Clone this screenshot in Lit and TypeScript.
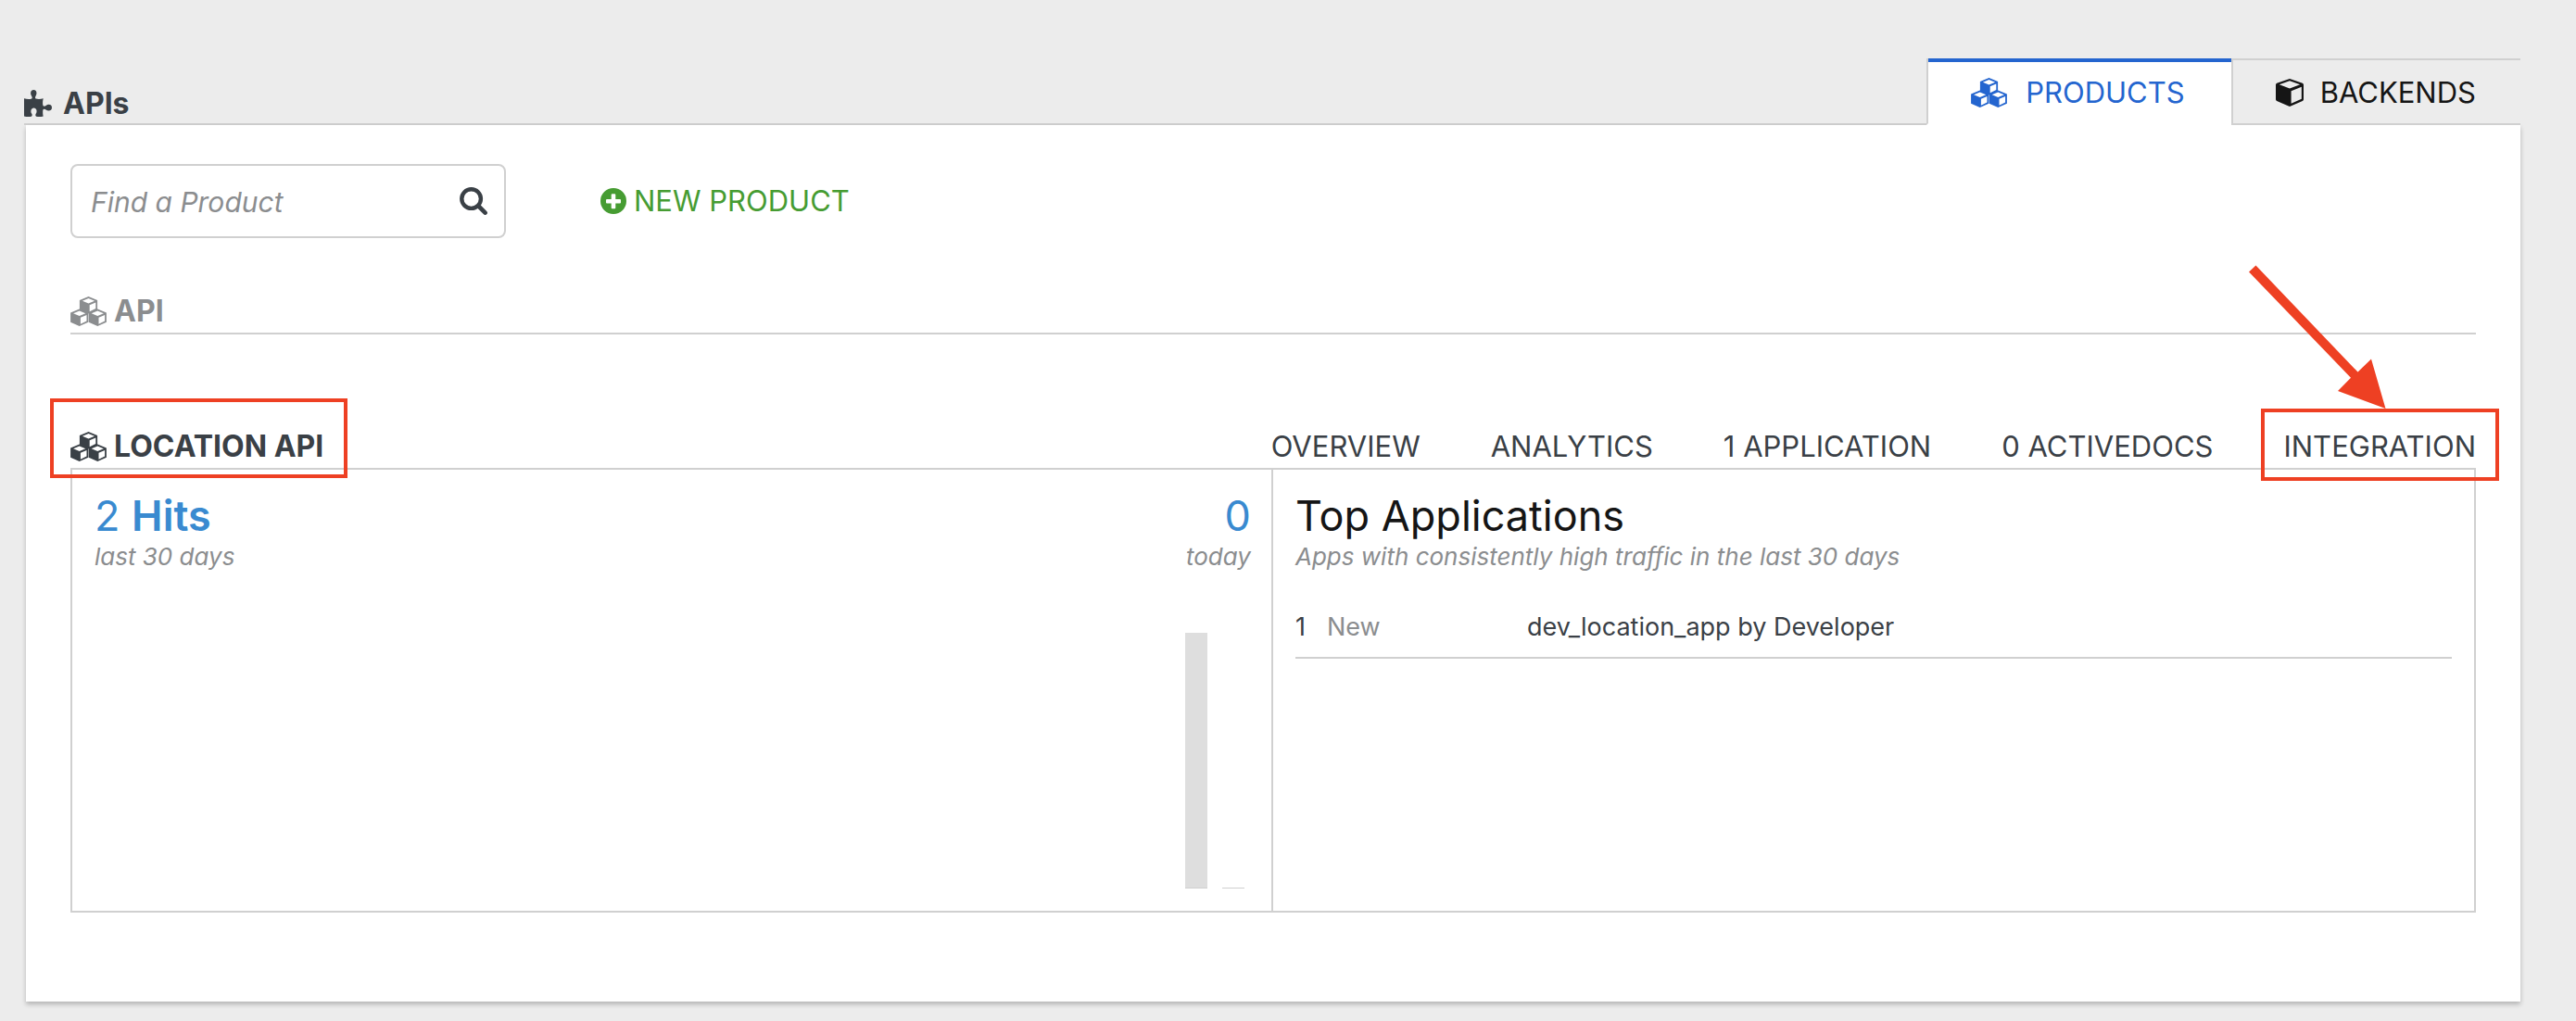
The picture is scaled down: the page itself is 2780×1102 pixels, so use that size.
import { LitElement, html, css, svg } from "lit";
import { customElement, state } from "lit/decorators.js";

const cube = (x: number, y: number) => svg`
  <path fill-rule="evenodd" transform="translate(${x} ${y})"
    d="M10 0L19.6 4V14.2L10 18.5L.4 14.2V4ZM10 1.9L16.6 4.7L10 7.5L3.4 4.7ZM11.2 9.3L17.8 6.5V13.1L11.2 16.2Z" />`;

const cubesIcon = html`
  <svg class="icon cubes" viewBox="0 0 39 32" aria-hidden="true">
    ${cube(9.5, 0)}${cube(-0.3, 13.5)}${cube(19.3, 13.5)}
  </svg>`;

const cubeIcon = html`
  <svg class="icon cube" viewBox="0 0 30 30" aria-hidden="true">
    <path fill-rule="evenodd"
      d="M15 0L28.8 4.7Q30 5.2 30 6.4V22.2Q30 23.4 28.9 24L15 30L1.1 24Q0 23.4 0 22.2V6.4Q0 5.2 1.2 4.7ZM15 2.3L3.8 6.2L15 10.6L26.2 6.2ZM16.6 13.2V26.7L27.8 21.8V8.8Z" />
  </svg>`;

const puzzleIcon = html`
  <svg class="icon puzzle" viewBox="0 0 30 30" aria-hidden="true">
    <path d="M0 9.3C3 10 6 10.2 8.2 9.4C9 8.8 8.8 7.6 8 6.4C6.6 4.6 6.6 0 10.3 0C14 0 14 4.6 12.6 6.4C11.8 7.6 11.8 8.8 12.6 9.4C15 10.2 18 9.9 20.7 9.3C20.2 11.5 19.9 14 20.3 16.5C20.8 18 22.4 18 23.6 17C26 15 30 15.6 30 19.2C30 22.6 26 23.4 23.6 21.4C22.4 20.6 20.8 20.6 20.3 22C20 24.5 20.3 27 20.7 28.6C18.5 29.2 15.5 29.3 13.2 28.8C12.2 28.4 12 27 12.7 25.8C14.4 23.4 13.6 19.4 10.5 19.4C7.4 19.4 6.6 23.4 8.3 25.8C9 27 8.8 28.4 7.8 28.8C5.5 29.3 2.5 29.2 0 28.6Z" />
  </svg>`;

const searchIcon = html`
  <svg class="icon search-glyph" viewBox="0 0 30 30" aria-hidden="true">
    <circle cx="12.6" cy="12.6" r="10.3" fill="none" stroke="currentColor" stroke-width="4.4" />
    <path d="M20.5 20.5L27.6 27.6" stroke="currentColor" stroke-width="4.6" stroke-linecap="round" />
  </svg>`;

const plusIcon = html`
  <svg class="icon plus" viewBox="0 0 28 28" aria-hidden="true">
    <path fill-rule="evenodd"
      d="M14 0A14 14 0 1 1 14 28A14 14 0 1 1 14 0ZM12.7 6.2Q11.7 6.2 11.7 7.2V11.9H7Q6 11.9 6 12.9V15.5Q6 16.5 7 16.5H11.7V21.2Q11.7 22.2 12.7 22.2H15.3Q16.3 22.2 16.3 21.2V16.5H21Q22 16.5 22 15.5V12.9Q22 11.9 21 11.9H16.3V7.2Q16.3 6.2 15.3 6.2Z" />
  </svg>`;

@customElement("app-root")
export class AppRoot extends LitElement {
  @state() private links = ["OVERVIEW", "ANALYTICS", "1 APPLICATION", "0 ACTIVEDOCS", "INTEGRATION"];
  @state() private hits = [2, 0];
  @state() private apps = [{ rank: 1, trend: "New", name: "dev_location_app by Developer" }];

  static styles = css`
    :host {
      --line: #d0d0d0;
      --ink: #3a4046;
      --muted: #8b8d8f;
      --hits: #398ad0;
      --mark: #ee4023;
      display: block;
      box-sizing: border-box;
      min-height: 100vh;
      padding: 63px 60px 21px 26px;
      background: #ececec;
      color: var(--ink);
      font-family: Inter, "Liberation Sans", sans-serif;
      font-size: 31px;
      line-height: 46px;
    }
    *, *::before, *::after { box-sizing: border-box; }
    h1, h2, h3, p { margin: 0; font-size: inherit; font-weight: inherit; }
    a { color: inherit; text-decoration: none; }
    .icon { display: block; flex: none; fill: currentColor; }
    .cubes { width: 39px; height: 32px; }
    .cube, .puzzle, .search-glyph { width: 30px; height: 30px; }
    .plus { width: 28px; height: 28px; }

    .head {
      display: flex;
      justify-content: space-between;
      align-items: flex-end;
      border-bottom: 2px solid var(--line);
    }
    .title {
      display: flex;
      align-items: center;
      gap: 12px;
      font-size: 32px;
      line-height: 42px;
      font-weight: 700;
    }
    .tabs { display: flex; margin-bottom: -2px; }
    .tab {
      display: flex;
      align-items: center;
      gap: 18px;
      height: 72px;
      padding: 2px 48px 0 46px;
      border: solid var(--line);
      border-width: 2px 0 2px 2px;
      color: #151515;
    }
    .tab.active {
      position: relative;
      padding: 2px 50px 0 46px;
      gap: 20px;
      border-bottom-color: #fff;
      background: #fff;
      color: #2465cf;
    }
    .tab.active::before {
      content: "";
      position: absolute;
      inset: -2px 0 auto 0;
      height: 4px;
      background: #2465cf;
    }

    .card {
      margin-left: 2px;
      padding: 42px 48px 96px;
      background: #fff;
      box-shadow: 0 3px 5px rgba(0, 0, 0, 0.24);
    }
    .tools { display: flex; align-items: center; gap: 102px; }
    .search {
      display: flex;
      align-items: center;
      width: 470px;
      height: 80px;
      padding: 0 18px 0 20px;
      border: 2px solid var(--line);
      border-radius: 8px;
    }
    .search input {
      flex: 1;
      min-width: 0;
      padding: 2px 0 0;
      border: 0;
      outline: 0;
      background: none;
      color: var(--ink);
      font: inherit;
      font-size: 30px;
    }
    .search input::placeholder { color: var(--muted); font-style: italic; opacity: 1; }
    .search button { padding: 0; border: 0; background: none; color: var(--ink); }
    .create { display: flex; align-items: center; gap: 8px; color: #469c32; }

    .api {
      display: flex;
      align-items: center;
      gap: 8px;
      margin-top: 54px;
      padding-top: 2px;
      border-bottom: 2px solid var(--line);
      color: var(--muted);
      font-size: 32px;
      font-weight: 700;
    }
    .product-head {
      display: flex;
      flex-wrap: wrap;
      justify-content: space-between;
      margin-top: 96px;
      padding-top: 2px;
    }
    .product-name {
      position: relative;
      display: flex;
      align-items: center;
      gap: 8px;
      font-size: 32px;
      font-weight: 700;
    }
    .product-name::after, .marked::after {
      content: "";
      position: absolute;
      border: 4px solid var(--mark);
      pointer-events: none;
    }
    .product-name::after { inset: -29px -26px -11px -22px; }
    .links { display: flex; gap: 76px; }
    .marked { position: relative; }
    .marked::after { inset: -18px -25px -14px -24px; }
    .arrow {
      position: absolute;
      right: 97px;
      bottom: 64px;
      width: 150px;
      height: 156px;
      fill: var(--mark);
      pointer-events: none;
    }

    .product {
      display: grid;
      grid-template-columns: 1fr 1fr;
      min-height: 480px;
      border: 2px solid var(--line);
    }
    .hits {
      display: flex;
      flex-direction: column;
      justify-content: space-between;
      padding: 21px 22px 24px 24px;
      border-right: 2px solid var(--line);
    }
    .figures { display: flex; justify-content: space-between; }
    .today { text-align: right; }
    .big { font-size: 45px; line-height: 57px; color: #151515; }
    .hits .big { color: var(--hits); }
    .big strong { font-weight: 600; }
    .note { font-size: 26px; line-height: 32px; font-style: italic; color: var(--muted); }
    .chart {
      display: flex;
      justify-content: flex-end;
      align-items: flex-end;
      gap: 16px;
      height: 276px;
      padding-right: 7px;
    }
    .bar {
      width: 24px;
      min-height: 1px;
      border-bottom: 1px solid var(--line);
      background: #dedede;
    }
    .top { padding: 21px 24px; }
    table {
      width: 100%;
      margin-top: 28px;
      border-collapse: collapse;
      font-size: 27px;
      line-height: 40px;
    }
    td { padding: 12px 0; border-bottom: 2px solid var(--line); }
    .rank { width: 34px; }
    .trend { width: 216px; color: var(--muted); }
  `;

  render() {
    const peak = Math.max(...this.hits);
    return html`
      <header class="head">
        <h1 class="title">${puzzleIcon}APIs</h1>
        <nav class="tabs">
          <a class="tab active" href="#products">${cubesIcon}PRODUCTS</a>
          <a class="tab" href="#backends">${cubeIcon}BACKENDS</a>
        </nav>
      </header>
      <main class="card">
        <div class="tools">
          <form class="search">
            <input type="text" aria-label="Find a Product" placeholder="Find a Product" />
            <button type="button" aria-label="Search">${searchIcon}</button>
          </form>
          <a class="create" href="#new">${plusIcon}NEW PRODUCT</a>
        </div>
        <h2 class="api">${cubesIcon}API</h2>
        <section>
          <div class="product-head">
            <h2 class="product-name">${cubesIcon}LOCATION API</h2>
            <nav class="links">
              ${this.links.map((l) =>
                l === "INTEGRATION"
                  ? html`<a class="marked" href="#integration">${l}<svg class="arrow" viewBox="0 0 150 156" aria-hidden="true">
                      <path d="M9.5 1.5L2 8.5L112 122.7L98 137L149.5 156L134 102.5L119.5 116.5Z" />
                    </svg></a>`
                  : html`<a href="#${l.toLowerCase().replace(" ", "-")}">${l}</a>`
              )}
            </nav>
          </div>
          <div class="product">
            <div class="hits">
              <div class="figures">
                <div>
                  <h3 class="big">2 <strong>Hits</strong></h3>
                  <p class="note">last 30 days</p>
                </div>
                <div class="today">
                  <p class="big">0</p>
                  <p class="note">today</p>
                </div>
              </div>
              <div class="chart">
                ${this.hits.map((n) => html`<div class="bar" style="height:${(n / peak) * 100}%"></div>`)}
              </div>
            </div>
            <div class="top">
              <h3 class="big">Top Applications</h3>
              <p class="note">Apps with consistently high traffic in the last 30 days</p>
              <table aria-label="Top Applications">
                <tbody>
                  ${this.apps.map(
                    (a) => html`<tr>
                      <td class="rank">${a.rank}</td>
                      <td class="trend">${a.trend}</td>
                      <td><a href="#app">${a.name}</a></td>
                    </tr>`
                  )}
                </tbody>
              </table>
            </div>
          </div>
        </section>
      </main>
    `;
  }
}
